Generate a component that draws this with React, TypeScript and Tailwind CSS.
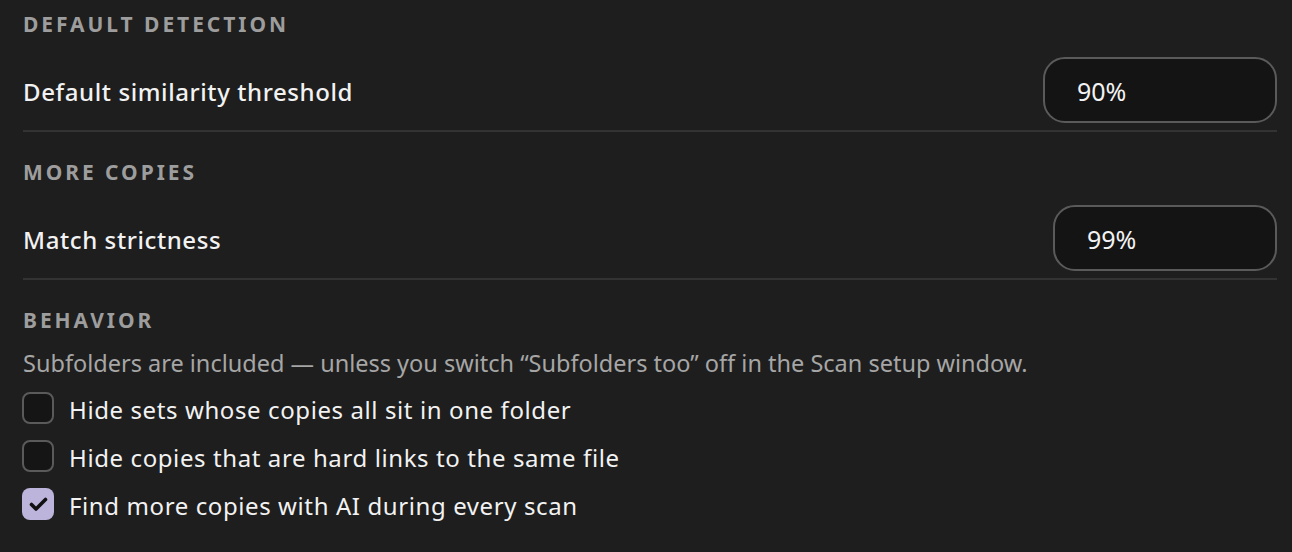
import React, { useState } from "react";

const font = { fontFamily: '"Noto Sans", "Open Sans", sans-serif' };

function Heading({ children, className = "" }: { children: React.ReactNode; className?: string }) {
  return (
    <div className={`h-[28px] leading-[28px] text-[21px] font-bold tracking-[0.14em] text-[#9d9d9d] ${className}`}>
      {children}
    </div>
  );
}

function Row({ label, value, w }: { label: string; value: string; w: string }) {
  return (
    <div className="mt-[19px] flex h-[66px] items-center justify-between">
      <div className="pt-[3px] text-[24px] font-medium tracking-[0.025em] text-[#f2f2f2]">{label}</div>
      <div className={`flex h-[66px] ${w} items-center rounded-[22px] border-2 border-[#5a5a5a] bg-[#141414] pl-[32px] pt-[4px] text-[25px] text-[#f2f2f2]`}>
        {value}
      </div>
    </div>
  );
}

function Check({ label, initial }: { label: string; initial: boolean }) {
  const [on, setOn] = useState(initial);
  return (
    <label className="flex h-[48px] cursor-pointer items-center gap-[15px]" onClick={() => setOn(!on)}>
      <span
        className={`flex h-[32px] w-[32px] shrink-0 items-center justify-center rounded-[8px] ${
          on ? "bg-[#bdb4dc]" : "border-2 border-[#5a5a5a] bg-[#151515]"
        }`}
      >
        {on && (
          <svg width="32" height="32" viewBox="0 0 32 32" fill="none" stroke="#111" strokeWidth="3.6" strokeLinecap="round" strokeLinejoin="round">
            <path d="M9.5 16.5l4.5 4.5L23.5 11.5" />
          </svg>
        )}
      </span>
      <span className="pt-[3px] text-[24px] tracking-[0.025em] text-[#f2f2f2]">{label}</span>
    </label>
  );
}

export default function App() {
  return (
    <div className="min-h-[552px] bg-[#1e1e1e] pl-[22px] pr-[15px] pt-[10px]" style={font}>
      <div className="pl-[1px]">
        <Heading>DEFAULT DETECTION</Heading>
        <Row label="Default similarity threshold" value="90%" w="w-[234px]" />
      </div>
      <div className="ml-[1px] mt-[7px] h-[2px] bg-[#333333]" />
      <div className="pl-[1px]">
        <Heading className="mt-[26px]">MORE COPIES</Heading>
        <Row label="Match strictness" value="99%" w="w-[224px]" />
      </div>
      <div className="ml-[1px] mt-[7px] h-[2px] bg-[#333333]" />
      <div className="pl-[1px]">
        <Heading className="mt-[26px]">BEHAVIOR</Heading>
        <div className="mt-[14px] h-[30px] leading-[30px] text-[23.5px] text-[#a6a6a6]">
          Subfolders are included — unless you switch “Subfolders too” off in the Scan setup window.
        </div>
      </div>
      <div className="mt-[6px]">
        <Check label="Hide sets whose copies all sit in one folder" initial={false} />
        <Check label="Hide copies that are hard links to the same file" initial={false} />
        <Check label="Find more copies with AI during every scan" initial={true} />
      </div>
    </div>
  );
}
